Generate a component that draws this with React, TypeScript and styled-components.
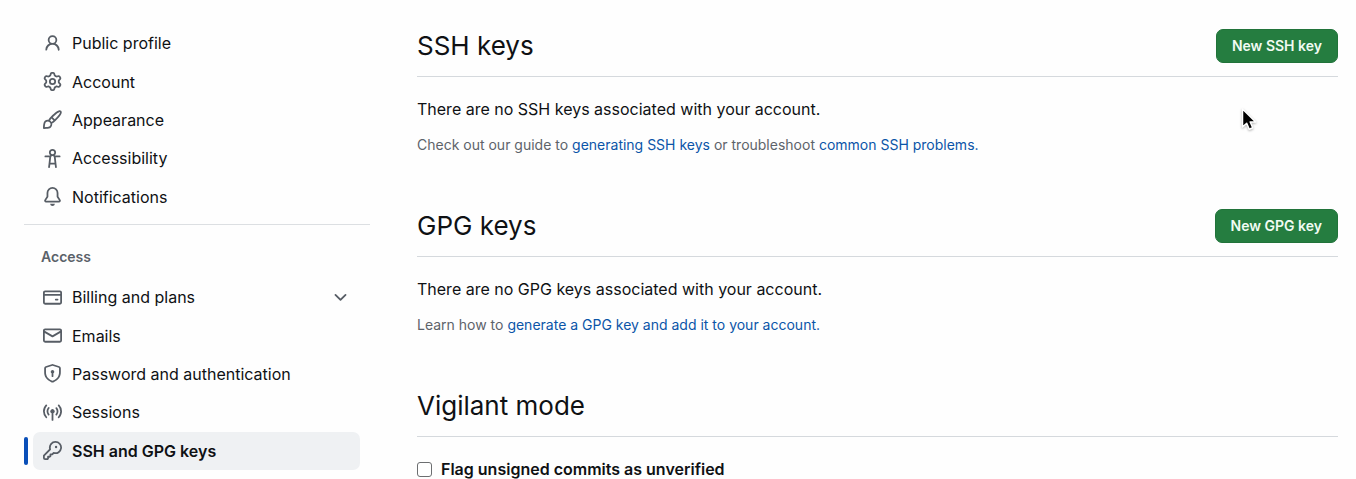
import React from "react";
import styled, { createGlobalStyle } from "styled-components";

const GlobalStyle = createGlobalStyle`
  *, *::before, *::after { box-sizing: border-box; }
  body {
    margin: 0;
    background: #fefefe;
    color: #0f1114;
    font-family: Inter, "Liberation Sans", sans-serif;
    font-size: 16px;
    line-height: 24px;
  }
`;

const Page = styled.div`
  position: relative;
  display: flex;
  align-items: flex-start;
  gap: 47px;
  padding: 24px 18px 0 24px;
`;

const Sidebar = styled.nav`
  flex: 0 0 346px;
`;

const NavList = styled.ul`
  display: grid;
  grid-auto-rows: 1fr;
  min-height: 192px;
  margin: 0;
  padding: 0 10px 0 9px;
  list-style: none;
`;

const NavItem = styled.li`
  position: relative;
  display: flex;
`;

const NavLink = styled.a<{ $current?: boolean }>`
  flex: 1;
  display: flex;
  align-items: center;
  gap: 10px;
  padding: 0 10px;
  border-radius: 7px;
  color: inherit;
  text-decoration: none;
  background: ${(p) => (p.$current ? "#eff1f3" : "transparent")};
  font-weight: ${(p) => (p.$current ? 600 : 400)};

  &::before {
    content: "";
    display: ${(p) => (p.$current ? "block" : "none")};
    position: absolute;
    left: -9px;
    top: 5px;
    bottom: 5px;
    width: 4px;
    border-radius: 3px;
    background: #0a4fb8;
  }
`;

const NavButton = styled.button`
  flex: 1;
  display: flex;
  align-items: center;
  gap: 10px;
  padding: 0 10px;
  border: 0;
  background: none;
  color: inherit;
  font: inherit;
  text-align: left;
`;

const NavText = styled.span`
  flex: 1;
`;

const Icon = styled.svg`
  flex: none;
  width: 19px;
  height: 19px;
  fill: #575d65;
`;

const Divider = styled.hr`
  height: 1px;
  margin: 8px 0 22px;
  border: 0;
  background: #dcdfe2;
`;

const GroupTitle = styled.h3`
  margin: 0 0 11px;
  padding: 0 17px;
  color: #5a6169;
  font-size: 14px;
  font-weight: 600;
  line-height: 20px;
`;

const Main = styled.main`
  flex: 1;
  min-width: 0;
  padding-top: 4px;
`;

const Section = styled.section`
  & + & {
    margin-top: 49px;
  }
`;

const SectionHeader = styled.header`
  display: flex;
  align-items: center;
  justify-content: space-between;
  padding-bottom: 12px;
  border-bottom: 1px solid #d5d9dd;
`;

const SectionTitle = styled.h2`
  margin: 0;
  font-size: 26px;
  font-weight: 400;
  line-height: 36px;
`;

const PrimaryButton = styled.button`
  height: 34px;
  padding: 0 15px;
  border: 1px solid #21733a;
  border-radius: 7px;
  background: #257d40;
  color: #f1fbf3;
  font: 600 14px/20px Inter, "Liberation Sans", sans-serif;
`;

const Message = styled.p`
  margin: 20px 0 12px;
`;

const Note = styled.p`
  margin: 0;
  padding-bottom: 2px;
  color: #5d636a;
  font-size: 14px;
  line-height: 24px;
`;

const TextLink = styled.a`
  color: #0b55a8;
  text-decoration: none;
`;

const CheckLabel = styled.label`
  display: flex;
  align-items: center;
  gap: 9px;
  margin-top: 22px;
  font-weight: 600;
  line-height: 20px;
`;

const CheckBox = styled.input`
  appearance: none;
  width: 15px;
  height: 15px;
  margin: 0;
  border: 1px solid #6c6e70;
  border-radius: 3px;
  background: #fff;
`;

const Pointer = styled.svg`
  position: absolute;
  top: 106px;
  right: 98px;
  width: 18px;
  height: 26px;
  filter: drop-shadow(0 1px 1px rgba(0, 0, 0, 0.3));
`;

const paths = {
  person:
    "M10.561 8.073a6.005 6.005 0 0 1 3.432 5.142.75.75 0 1 1-1.498.07 4.5 4.5 0 0 0-8.99 0 .75.75 0 0 1-1.498-.07 6.004 6.004 0 0 1 3.431-5.142 3.999 3.999 0 1 1 5.123 0ZM10.5 5a2.5 2.5 0 1 0-5 0 2.5 2.5 0 0 0 5 0Z",
  gear:
    "M8 0a8.2 8.2 0 0 1 .701.031C9.444.095 9.99.645 10.16 1.29l.288 1.107c.018.066.079.158.212.224.231.114.454.243.668.386.123.082.233.09.299.071l1.103-.303c.644-.176 1.392.021 1.82.63.27.385.506.792.704 1.218.315.675.111 1.422-.364 1.891l-.814.806c-.049.048-.098.147-.088.294.016.257.016.515 0 .772-.01.147.038.246.088.294l.814.806c.475.469.679 1.216.364 1.891a7.977 7.977 0 0 1-.704 1.217c-.428.61-1.176.807-1.82.63l-1.102-.302c-.067-.019-.177-.011-.3.071a5.909 5.909 0 0 1-.668.386c-.133.066-.194.158-.211.224l-.29 1.106c-.168.646-.715 1.196-1.458 1.26a8.006 8.006 0 0 1-1.402 0c-.743-.064-1.289-.614-1.458-1.26l-.289-1.106c-.018-.066-.079-.158-.212-.224a5.738 5.738 0 0 1-.668-.386c-.123-.082-.233-.09-.299-.071l-1.103.303c-.644.176-1.392-.021-1.82-.63a8.12 8.12 0 0 1-.704-1.218c-.315-.675-.111-1.422.363-1.891l.815-.806c.05-.048.098-.147.088-.294a6.214 6.214 0 0 1 0-.772c.01-.147-.038-.246-.088-.294l-.815-.806C.635 6.045.431 5.298.746 4.623a7.92 7.92 0 0 1 .704-1.217c.428-.61 1.176-.807 1.82-.63l1.102.302c.067.019.177.011.3-.071.214-.143.437-.272.668-.386.133-.066.194-.158.211-.224l.29-1.106C6.009.645 6.556.095 7.299.03 7.53.01 7.764 0 8 0Zm-.571 1.525c-.036.003-.108.036-.137.146l-.289 1.105c-.147.561-.549.967-.998 1.189-.173.086-.34.183-.5.29-.417.278-.97.423-1.529.27l-1.103-.303c-.109-.03-.175.016-.195.045-.22.312-.412.644-.573.99-.014.031-.021.11.059.19l.815.806c.411.406.562.957.53 1.456a4.709 4.709 0 0 0 0 .582c.032.499-.119 1.05-.53 1.456l-.815.806c-.081.08-.073.159-.059.19.162.346.353.677.573.989.02.03.085.076.195.046l1.102-.303c.56-.153 1.113-.008 1.53.27.161.107.328.204.501.29.447.222.85.629.997 1.189l.289 1.105c.029.109.101.143.137.146a6.6 6.6 0 0 0 1.142 0c.036-.003.108-.036.137-.146l.289-1.105c.147-.561.549-.967.998-1.189.173-.086.34-.183.5-.29.417-.278.97-.423 1.529-.27l1.103.303c.109.029.175-.016.195-.045.22-.313.411-.644.573-.99.014-.031.021-.11-.059-.19l-.815-.806c-.411-.406-.562-.957-.53-1.456a4.709 4.709 0 0 0 0-.582c-.032-.499.119-1.05.53-1.456l.815-.806c.081-.08.073-.159.059-.19a6.464 6.464 0 0 0-.573-.989c-.02-.03-.085-.076-.195-.046l-1.102.303c-.56.153-1.113.008-1.53-.27a4.44 4.44 0 0 0-.501-.29c-.447-.222-.85-.629-.997-1.189l-.289-1.105c-.029-.11-.101-.143-.137-.146a6.6 6.6 0 0 0-1.142 0ZM11 8a3 3 0 1 1-6 0 3 3 0 0 1 6 0ZM9.5 8a1.5 1.5 0 1 0-3.001.001A1.5 1.5 0 0 0 9.5 8Z",
  paintbrush:
    "M11.134 1.535c.7-.509 1.416-.942 2.076-1.155.649-.21 1.463-.267 2.069.34.603.601.568 1.411.368 2.07-.202.668-.624 1.39-1.125 2.096-1.011 1.424-2.496 2.987-3.775 4.249-1.098 1.084-2.132 1.839-3.04 2.3a3.744 3.744 0 0 1-1.055 3.217c-.431.431-1.065.691-1.657.861-.614.177-1.294.287-1.914.357A21.151 21.151 0 0 1 .797 16H.743l.007-.75H.749L.742 16a.75.75 0 0 1-.743-.742l.743-.008-.742.007v-.054a21.25 21.25 0 0 1 .13-2.284c.067-.647.187-1.287.358-1.914.17-.591.43-1.226.86-1.657a3.746 3.746 0 0 1 3.227-1.054c.466-.893 1.225-1.907 2.314-2.982 1.271-1.255 2.833-2.75 4.245-3.777ZM1.62 13.089c-.051.464-.086.929-.104 1.395.466-.018.932-.053 1.396-.104a10.511 10.511 0 0 0 1.668-.309c.526-.151.856-.325 1.011-.48a2.25 2.25 0 1 0-3.182-3.182c-.155.155-.329.485-.48 1.01a10.515 10.515 0 0 0-.309 1.67Zm10.396-10.34c-1.224.89-2.605 2.189-3.822 3.384l1.718 1.718c1.21-1.205 2.51-2.597 3.387-3.833.47-.662.78-1.227.912-1.662.134-.444.032-.551.009-.575h-.001V1.78c-.014-.014-.113-.113-.548.027-.432.14-.995.462-1.655.942Zm-4.832 7.266-.001.001a9.859 9.859 0 0 0 1.63-1.142L7.155 7.216a9.7 9.7 0 0 0-1.161 1.607c.482.302.889.71 1.19 1.192Z",
  accessibility:
    "M9.923 5.302c.063.063.122.129.178.198H14A.75.75 0 0 1 14 7h-3.3l.578 5.163.362 2.997a.75.75 0 0 1-1.49.18L9.868 13H6.132l-.282 2.34a.75.75 0 1 1-1.49-.18l.362-2.997L5.3 7H2a.75.75 0 0 1 0-1.5h3.9a2.54 2.54 0 0 1 .176-.198 3 3 0 1 1 3.847 0ZM9.2 7.073h-.001a1.206 1.206 0 0 0-2.398 0L6.305 11.5h3.39ZM9.5 3a1.5 1.5 0 1 0-3.001.001A1.5 1.5 0 0 0 9.5 3Z",
  bell:
    "M8 16a2 2 0 0 0 1.985-1.75c.017-.137-.097-.25-.235-.25h-3.5c-.138 0-.252.113-.235.25A2 2 0 0 0 8 16ZM3 5a5 5 0 0 1 10 0v2.947c0 .05.015.098.042.139l1.703 2.555A1.519 1.519 0 0 1 13.482 13H2.518a1.516 1.516 0 0 1-1.263-2.36l1.703-2.554A.255.255 0 0 0 3 7.947Zm5-3.5A3.5 3.5 0 0 0 4.5 5v2.947c0 .346-.102.683-.294.97l-1.703 2.556a.017.017 0 0 0-.003.01l.001.006c0 .002.002.004.004.006l.006.004.007.001h10.964l.007-.001.006-.004.004-.006.001-.007a.017.017 0 0 0-.003-.01l-1.703-2.554a1.745 1.745 0 0 1-.294-.97V5A3.5 3.5 0 0 0 8 1.5Z",
  creditCard:
    "M10.75 9a.75.75 0 0 0 0 1.5h1.5a.75.75 0 0 0 0-1.5h-1.5ZM0 3.75C0 2.784.784 2 1.75 2h12.5c.966 0 1.75.784 1.75 1.75v8.5A1.75 1.75 0 0 1 14.25 14H1.75A1.75 1.75 0 0 1 0 12.25ZM14.5 6.5h-13v5.75c0 .138.112.25.25.25h12.5a.25.25 0 0 0 .25-.25Zm0-2.75a.25.25 0 0 0-.25-.25H1.75a.25.25 0 0 0-.25.25V5h13Z",
  mail:
    "M1.75 2h12.5c.966 0 1.75.784 1.75 1.75v8.5A1.75 1.75 0 0 1 14.25 14H1.75A1.75 1.75 0 0 1 0 12.25v-8.5C0 2.784.784 2 1.75 2ZM1.5 12.251c0 .138.112.25.25.25h12.5a.25.25 0 0 0 .25-.25V5.809L8.38 9.397a.75.75 0 0 1-.76 0L1.5 5.809v6.442Zm13-8.181v-.32a.25.25 0 0 0-.25-.25H1.75a.25.25 0 0 0-.25.25v.32L8 7.88Z",
  shieldLock:
    "m8.533.133 5.25 1.68A1.75 1.75 0 0 1 15 3.48V7c0 1.566-.32 3.182-1.303 4.682-.983 1.498-2.585 2.813-5.032 3.855a1.697 1.697 0 0 1-1.33 0c-2.447-1.042-4.049-2.357-5.032-3.855C1.32 10.182 1 8.566 1 7V3.48a1.755 1.755 0 0 1 1.217-1.667l5.25-1.68a1.748 1.748 0 0 1 1.066 0Zm-.61 1.429.001.001-5.25 1.68a.251.251 0 0 0-.174.237V7c0 1.36.275 2.666 1.057 3.859.784 1.194 2.121 2.342 4.366 3.298a.196.196 0 0 0 .154 0c2.245-.957 3.582-2.103 4.366-3.297C13.225 9.666 13.5 8.358 13.5 7V3.48a.25.25 0 0 0-.174-.238l-5.25-1.68a.25.25 0 0 0-.153 0ZM9.5 6.5c0 .536-.286 1.032-.75 1.3v2.45a.75.75 0 0 1-1.5 0V7.8A1.5 1.5 0 1 1 9.5 6.5Z",
  broadcast:
    "M8.75 8.582v5.668a.75.75 0 0 1-1.5 0V8.582a1.75 1.75 0 1 1 1.5 0Zm3.983-7.125a.75.75 0 0 1 1.06.026A7.976 7.976 0 0 1 16 7c0 2.139-.84 4.083-2.207 5.517a.75.75 0 1 1-1.086-1.034A6.474 6.474 0 0 0 14.5 7a6.474 6.474 0 0 0-1.793-4.483.75.75 0 0 1 .026-1.06Zm-9.466 0c.3.286.312.76.026 1.06A6.474 6.474 0 0 0 1.5 7a6.47 6.47 0 0 0 1.793 4.483.75.75 0 0 1-1.086 1.034A7.973 7.973 0 0 1 0 7c0-2.139.84-4.083 2.207-5.517a.75.75 0 0 1 1.06-.026Zm8.556 2.321A4.988 4.988 0 0 1 13 7a4.988 4.988 0 0 1-1.177 3.222.75.75 0 1 1-1.146-.967A3.487 3.487 0 0 0 11.5 7c0-.86-.309-1.645-.823-2.255a.75.75 0 0 1 1.146-.967Zm-6.492.958A3.48 3.48 0 0 0 4.5 7a3.48 3.48 0 0 0 .823 2.255.75.75 0 0 1-1.146.967A4.981 4.981 0 0 1 3 7a4.982 4.982 0 0 1 1.188-3.236.75.75 0 1 1 1.143.972Z",
  key:
    "M10.5 0a5.499 5.499 0 1 1-1.288 10.848l-.932.932a.749.749 0 0 1-.53.22H7v.75a.749.749 0 0 1-.22.53l-.5.5a.749.749 0 0 1-.53.22H5v.75a.749.749 0 0 1-.22.53l-.5.5a.749.749 0 0 1-.53.22h-2A1.75 1.75 0 0 1 0 14.25v-2c0-.199.079-.389.22-.53l4.932-4.932A5.5 5.5 0 0 1 10.5 0Zm-4 5.5c-.001.431.069.86.205 1.269a.75.75 0 0 1-.181.768L1.5 12.56v1.69c0 .138.112.25.25.25h1.69l.06-.06v-1.19a.75.75 0 0 1 .75-.75h1.19l.06-.06v-1.19a.75.75 0 0 1 .75-.75h1.19l1.023-1.025a.75.75 0 0 1 .768-.18A4 4 0 1 0 6.5 5.5ZM11 6a1 1 0 1 1 0-2 1 1 0 0 1 0 2Z",
  chevronDown:
    "M12.78 5.22a.749.749 0 0 1 0 1.06l-4.25 4.25a.749.749 0 0 1-1.06 0L3.22 6.28a.749.749 0 1 1 1.06-1.06L8 8.939l3.72-3.719a.749.749 0 0 1 1.06 0Z",
};

type IconName = keyof typeof paths;

function Glyph({ name }: { name: IconName }) {
  return (
    <Icon viewBox="0 0 16 16" aria-hidden="true">
      <path d={paths[name]} />
    </Icon>
  );
}

type Entry = { icon: IconName; label: string; current?: boolean; expandable?: boolean };

const profileEntries: Entry[] = [
  { icon: "person", label: "Public profile" },
  { icon: "gear", label: "Account" },
  { icon: "paintbrush", label: "Appearance" },
  { icon: "accessibility", label: "Accessibility" },
  { icon: "bell", label: "Notifications" },
];

const accessEntries: Entry[] = [
  { icon: "creditCard", label: "Billing and plans", expandable: true },
  { icon: "mail", label: "Emails" },
  { icon: "shieldLock", label: "Password and authentication" },
  { icon: "broadcast", label: "Sessions" },
  { icon: "key", label: "SSH and GPG keys", current: true },
];

function NavGroup({ entries }: { entries: Entry[] }) {
  return (
    <NavList>
      {entries.map((e) => (
        <NavItem key={e.label}>
          {e.expandable ? (
            <NavButton type="button" aria-expanded="false">
              <Glyph name={e.icon} />
              <NavText>{e.label}</NavText>
              <Glyph name="chevronDown" />
            </NavButton>
          ) : (
            <NavLink href="#" $current={e.current} aria-current={e.current ? "page" : undefined}>
              <Glyph name={e.icon} />
              <NavText>{e.label}</NavText>
            </NavLink>
          )}
        </NavItem>
      ))}
    </NavList>
  );
}

export default function App() {
  return (
    <>
      <GlobalStyle />
      <Page>
        <Sidebar aria-label="Settings">
          <NavGroup entries={profileEntries} />
          <Divider />
          <GroupTitle>Access</GroupTitle>
          <NavGroup entries={accessEntries} />
        </Sidebar>
        <Main>
          <Section>
            <SectionHeader>
              <SectionTitle>SSH keys</SectionTitle>
              <PrimaryButton type="button">New SSH key</PrimaryButton>
            </SectionHeader>
            <Message>There are no SSH keys associated with your account.</Message>
            <Note>
              Check out our guide to <TextLink href="#">generating SSH keys</TextLink> or troubleshoot{" "}
              <TextLink href="#">common SSH problems.</TextLink>
            </Note>
          </Section>
          <Section>
            <SectionHeader>
              <SectionTitle>GPG keys</SectionTitle>
              <PrimaryButton type="button">New GPG key</PrimaryButton>
            </SectionHeader>
            <Message>There are no GPG keys associated with your account.</Message>
            <Note>
              Learn how to <TextLink href="#">generate a GPG key and add it to your account.</TextLink>
            </Note>
          </Section>
          <Section>
            <SectionHeader>
              <SectionTitle>Vigilant mode</SectionTitle>
            </SectionHeader>
            <CheckLabel>
              <CheckBox type="checkbox" />
              Flag unsigned commits as unverified
            </CheckLabel>
          </Section>
        </Main>
        <Pointer viewBox="0 0 18 26" aria-hidden="true">
          <path
            d="M2.500 3v18l4.200-3.700 2.500 6 3.500-1.500-2.500-5.800h5.500Z"
            fill="#000"
            stroke="#fff"
            strokeWidth="1.500"
            strokeLinejoin="round"
          />
        </Pointer>
      </Page>
    </>
  );
}
